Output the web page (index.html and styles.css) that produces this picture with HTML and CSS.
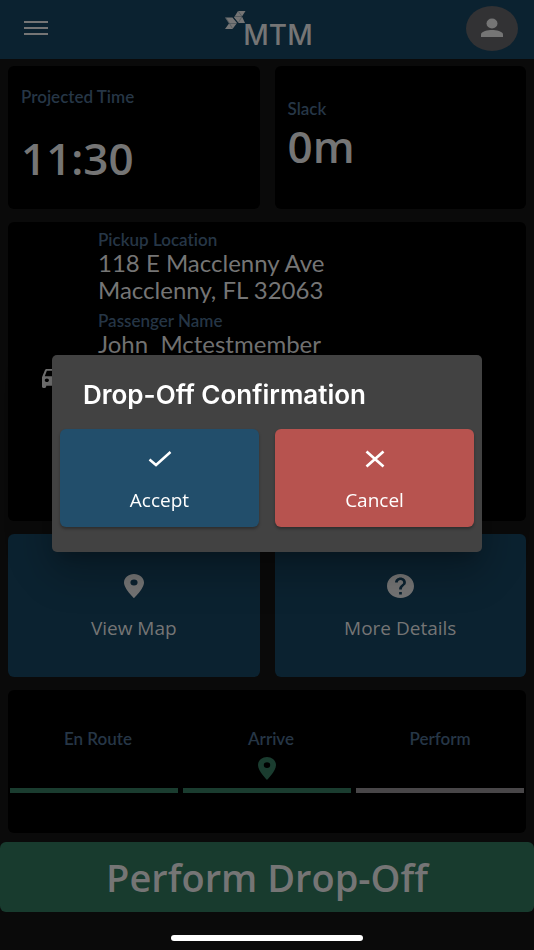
FILE: index.html
```html
<!DOCTYPE html>
<html lang="en">
<head>
<meta charset="utf-8">
<meta name="viewport" content="width=device-width, initial-scale=1">
<title>MTM Driver</title>
<link rel="stylesheet" href="styles.css">
</head>
<body>
<div class="app">
  <header class="topbar">
    <button class="menu" aria-label="Menu">
      <svg width="24" height="16" viewBox="0 0 24 16"><path d="M0 2h24M0 8h24M0 14h24" stroke="currentColor" stroke-width="2"/></svg>
    </button>
    <div class="logo">
      <svg class="logo-mark" width="21" height="19" viewBox="0 0 21 19" fill="currentColor">
        <path d="M13 0h7.500L17 5.500 20 12h-6.500L9 6.500z"/>
        <path d="M0 6.500h7.500l4.500 5.500L7.500 18H0l4-5.500z"/>
        <path d="M13 0l4 5.500H10M17 5.500l-3.500 6M1 7l3.500 5.500H12M4.500 12.500l3 5" fill="none" stroke="#0b2230" stroke-width=".3"/>
        <path d="M7.500 5.500l6 7" stroke="#0b2230" stroke-width=".6"/>
      </svg>
      <span class="logo-text">MTM</span>
    </div>
    <button class="avatar" aria-label="Profile">
      <svg width="22" height="20" viewBox="0 0 22 20" fill="currentColor"><ellipse cx="11" cy="5.500" rx="5.500" ry="5"/><path d="M0 19v-2.500C0 13.200 7 12 11 12s11 1.200 11 4.500V19z"/></svg>
    </button>
  </header>

  <main class="content">
    <div class="row">
      <section class="card stat stat-time"><h2 class="label">Projected Time</h2><p class="value">11:30</p></section>
      <section class="card stat stat-slack"><h2 class="label">Slack</h2><p class="value">0m</p></section>
    </div>

    <section class="card trip">
      <div class="trip-icon">
        <svg width="25" height="19" viewBox="3 4 18 16" preserveAspectRatio="none" fill="currentColor"><path d="M18.920 5.010C18.720 4.420 18.160 4 17.500 4h-11c-.66 0-1.210.42-1.420 1.010L3 11v8c0 .55.45 1 1 1h1c.55 0 1-.45 1-1v-1h12v1c0 .55.45 1 1 1h1c.55 0 1-.45 1-1v-8zM6.500 15c-.83 0-1.500-.67-1.500-1.500S5.670 12 6.500 12s1.500.67 1.500 1.500S7.330 15 6.500 15zm11 0c-.83 0-1.500-.67-1.500-1.500s.67-1.500 1.500-1.500 1.500.67 1.500 1.500-.67 1.500-1.500 1.500zM5 10l1.500-4.500h11L19 10z"/></svg>
      </div>
      <dl class="trip-info">
        <dt class="label">Pickup Location</dt>
        <dd>118 E Macclenny Ave<br>Macclenny, FL 32063</dd>
        <dt class="label">Passenger Name</dt>
        <dd>John&nbsp; Mctestmember</dd>
      </dl>
    </section>

    <div class="row">
      <button class="tile">
        <svg width="20" height="24" viewBox="5 2 14 20" preserveAspectRatio="none" fill="currentColor"><path d="M12 2C8.130 2 5 5.130 5 9c0 5.250 7 13 7 13s7-7.750 7-13c0-3.870-3.130-7-7-7zm0 9.500a2.500 2.500 0 010-5 2.500 2.500 0 010 5z"/></svg>
        <span>View Map</span>
      </button>
      <button class="tile">
        <svg width="27" height="24" viewBox="2 2 20 20" preserveAspectRatio="none" fill="currentColor"><path d="M12 2C6.480 2 2 6.480 2 12s4.480 10 10 10 10-4.480 10-10S17.520 2 12 2zm1 17h-2v-2h2v2zm2.070-7.750l-.9.920C13.450 12.900 13 13.500 13 15h-2v-.5c0-1.100.45-2.100 1.170-2.830l1.240-1.260c.37-.36.59-.86.59-1.410 0-1.100-.9-2-2-2s-2 .9-2 2H8c0-2.210 1.790-4 4-4s4 1.790 4 4c0 .88-.36 1.680-.93 2.250z"/></svg>
        <span>More Details</span>
      </button>
    </div>

    <section class="card progress">
      <ol class="steps">
        <li class="step done"><span class="label">En Route</span></li>
        <li class="step done"><span class="label">Arrive</span>
          <svg width="18" height="23" viewBox="5 2 14 20" preserveAspectRatio="none" fill="currentColor"><path d="M12 2C8.130 2 5 5.130 5 9c0 5.250 7 13 7 13s7-7.750 7-13c0-3.870-3.130-7-7-7zm0 9.500a2.500 2.500 0 010-5 2.500 2.500 0 010 5z"/></svg>
        </li>
        <li class="step"><span class="label">Perform</span></li>
      </ol>
    </section>
  </main>

  <button class="perform">Perform Drop-Off</button>
  <div class="home-area"><div class="home-bar"></div></div>
</div>

<div class="overlay">
  <div class="dialog" role="dialog" aria-modal="true" aria-labelledby="dialog-title">
    <h1 id="dialog-title" class="dialog-title">Drop-Off Confirmation</h1>
    <div class="dialog-actions">
      <button class="action accept">
        <svg width="24" height="18" viewBox="0 0 24 18" fill="none" stroke="currentColor" stroke-width="2.500"><path d="M1.500 9.500l6.500 5.500L22.500 2"/></svg>
        <span>Accept</span>
      </button>
      <button class="action cancel">
        <svg width="20" height="18" viewBox="0 0 20 18" fill="none" stroke="currentColor" stroke-width="2.700"><path d="M1.500 1.500l17 15M18.500 1.500l-17 15"/></svg>
        <span>Cancel</span>
      </button>
    </div>
  </div>
</div>
</body>
</html>
```
FILE: styles.css
```css
* { box-sizing: border-box; }

body {
  margin: 0;
  background: #0a0a0a;
  color: #757575;
  font-family: "Open Sans", "Noto Sans", sans-serif;
}

h1, h2, p, dl, dd, ol { margin: 0; padding: 0; }

button {
  border: 0;
  padding: 0;
  color: inherit;
  font-family: inherit;
  cursor: pointer;
}

svg { display: block; }

.app {
  min-height: 100vh;
  display: flex;
  flex-direction: column;
}

.topbar {
  display: grid;
  grid-template-columns: 1fr auto 1fr;
  align-items: center;
  height: 59px;
  padding: 0 16px 3px 24px;
  background: #0b2230;
}

.menu { justify-self: start; background: none; }

.logo { display: flex; height: 34px; padding-right: 4px; }
.logo-mark { margin-right: -3px; }
.logo-text {
  align-self: flex-end;
  font: 500 28px/20px Inter, sans-serif;
}

.avatar {
  justify-self: end;
  display: grid;
  place-items: center;
  width: 52px;
  height: 45px;
  border-radius: 50%;
  background: #323234;
}

.content {
  display: flex;
  flex-direction: column;
  gap: 13px;
  padding: 7px 8px 9px;
}

.row {
  display: grid;
  grid-template-columns: 1fr 1fr;
  gap: 15px;
}

.card { border-radius: 6px; background: #000; }

.label {
  color: #263646;
  font: 600 17px/20px Lato, sans-serif;
  font-variant-ligatures: none;
}

.stat { height: 143px; padding: 0 13px; }
.stat-time { padding-top: 21px; }
.stat-slack { padding-top: 33px; }
.value { font-size: 44px; font-weight: 600; line-height: 54px; }
.stat-time .value { margin-top: 24px; }

.trip {
  display: grid;
  grid-template-columns: 90px 1fr;
  height: 299px;
}
.trip-icon { align-self: center; padding: 13px 0 0 34px; }
.trip-info { padding-top: 9px; }
.trip-info dt { line-height: 18px; }
.trip-info dd {
  margin-bottom: 9px;
  font: 400 24px/27px Lato, sans-serif;
}

.tile, .action {
  display: flex;
  flex-direction: column;
  align-items: center;
  border-radius: 6px;
  font-size: 19px;
  line-height: 24px;
}

.tile {
  gap: 18px;
  height: 143px;
  padding-top: 40px;
  background: #0b2230;
}

.progress { height: 143px; padding: 39px 2px 0; }
.steps {
  display: grid;
  grid-template-columns: repeat(3, 1fr);
  gap: 5px;
  list-style: none;
}
.step {
  display: flex;
  flex-direction: column;
  align-items: center;
  gap: 8px;
  height: 64px;
  border-bottom: 5px solid #484648;
  color: #1a3c2f;
}
.step.done .label { padding-left: 8px; }
.step.done { border-color: #1a3c2f; }

.perform {
  height: 70px;
  border-radius: 6px;
  background: #183b2e;
  font-size: 38px;
  font-weight: 600;
  line-height: 48px;
}

.home-area {
  display: flex;
  justify-content: center;
  align-items: flex-end;
  flex: 1;
  padding-bottom: 9px;
}
.home-bar {
  width: 36%;
  height: 6px;
  border-radius: 3px;
  background: #fff;
}

.overlay {
  position: fixed;
  inset: 0;
  display: grid;
  place-items: center;
  padding: 0 52px 43px;
}

.dialog {
  width: 100%;
  max-width: 480px;
  padding: 26px 8px 25px;
  border-radius: 5px;
  background: #424242;
  color: #fff;
  box-shadow: 0 11px 15px -7px rgba(0, 0, 0, .2), 0 24px 38px 3px rgba(0, 0, 0, .14), 0 9px 46px 8px rgba(0, 0, 0, .12);
}

.dialog-title {
  padding: 0 23px;
  margin-bottom: 20px;
  font: 600 26px/28px Inter, sans-serif;
}

.dialog-actions {
  display: grid;
  grid-template-columns: 1fr 1fr;
  gap: 16px;
}

.action {
  gap: 20px;
  height: 98px;
  padding-top: 21px;
  box-shadow: 0 2px 3px rgba(0, 0, 0, .3);
}
.accept { background: #224e6b; }
.cancel { background: #b7534f; }
```
